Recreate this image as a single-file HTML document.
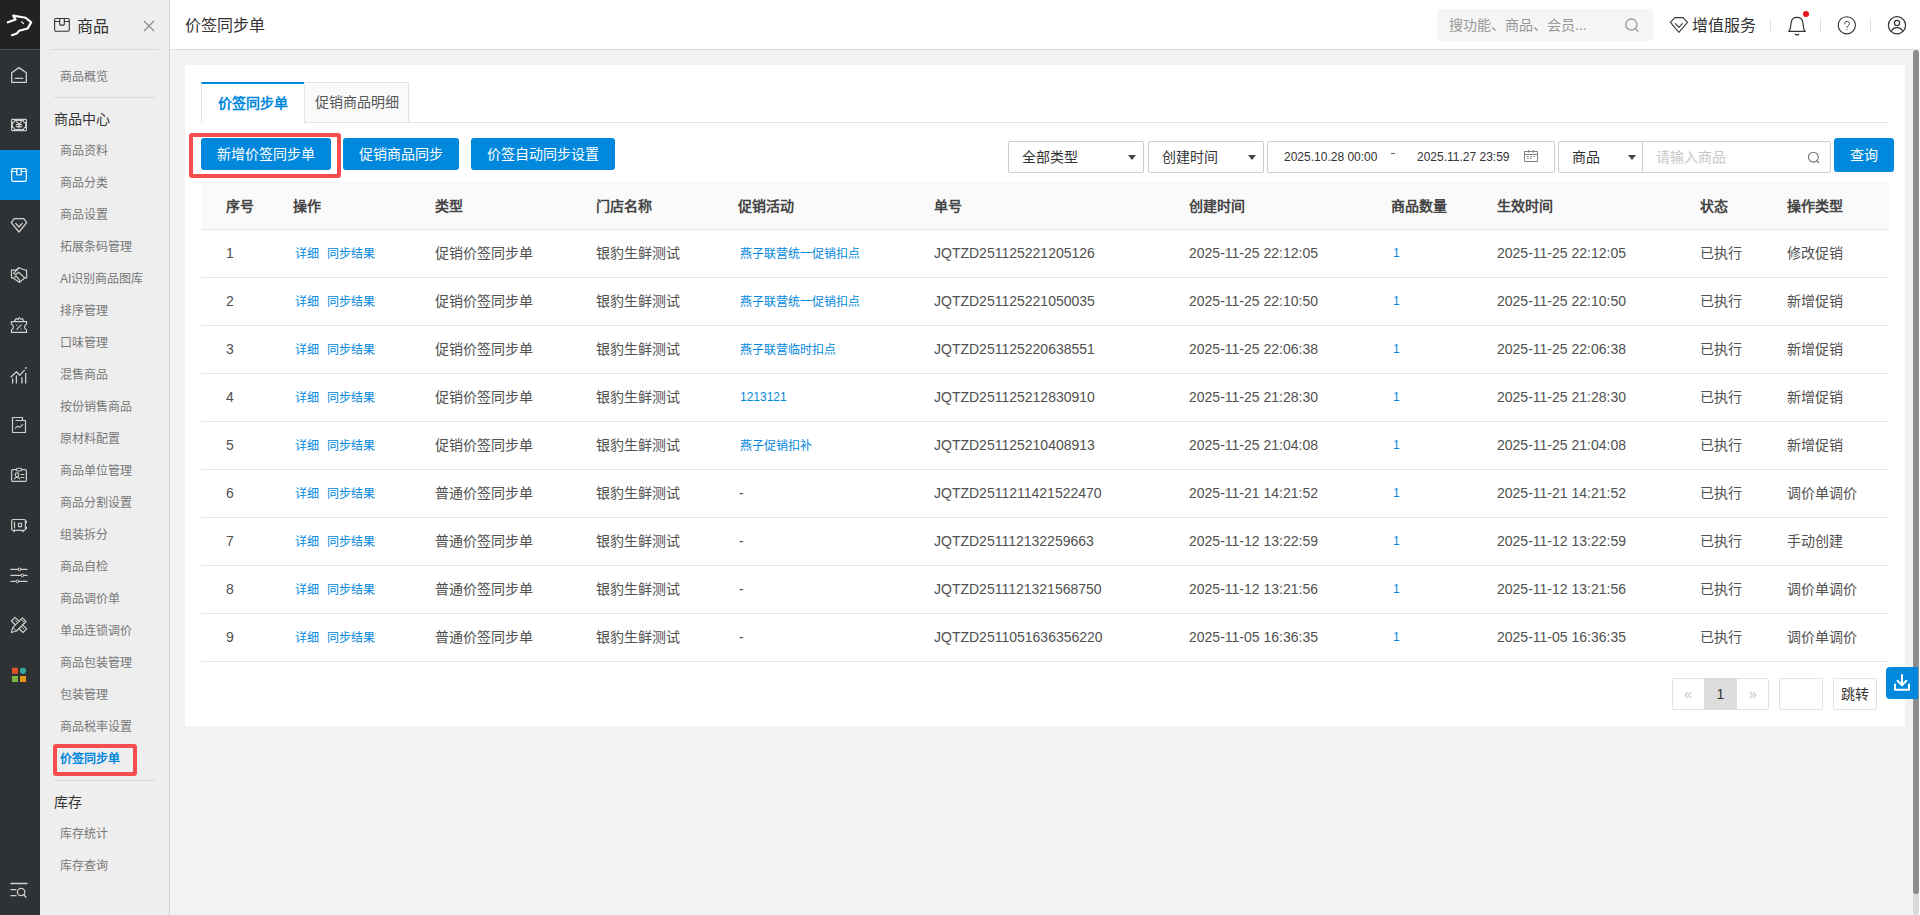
<!DOCTYPE html>
<html lang="zh-CN">
<head>
<meta charset="utf-8">
<style>
*{margin:0;padding:0;box-sizing:border-box}
html,body{width:1920px;height:915px;overflow:hidden;background:#f2f2f2;font-family:"Liberation Sans",sans-serif;color:#333}
.abs{position:absolute}
#nav{left:0;top:0;width:40px;height:915px;background:#2f3234}
#logo{left:0;top:0;width:40px;height:49px;background:#242220}
#logoline{left:0;top:49px;width:40px;height:1px;background:#4a4d50}
.navi{position:absolute;left:0;width:40px;height:50px}
.navi svg{position:absolute;left:0;top:0}
#side{left:40px;top:0;width:130px;height:915px;background:#eeeeee;border-right:1px solid #d2d2d2}
.si{position:absolute;left:20px;font-size:12px;color:#777;line-height:16px;white-space:nowrap}
.sh{position:absolute;left:14px;font-size:14px;color:#333;line-height:18px;white-space:nowrap}
.sdiv{position:absolute;height:1px;background:#d9d9d9}
#hdr{left:170px;top:0;width:1750px;height:50px;background:#fff;border-bottom:1px solid #dcdcdc}
#card{left:185px;top:65px;width:1720px;height:661px;background:#fff}
.btn{position:absolute;top:138px;height:32px;background:#0088dd;color:#fff;border-radius:3px;font-size:14px;line-height:32px;text-align:center;white-space:nowrap}
.sel{position:absolute;top:141px;height:32px;border:1px solid #cfcfcf;border-radius:2px;background:#fff;font-size:14px;line-height:30px;white-space:nowrap}
.tri{position:absolute;top:13px;width:0;height:0;border-left:4px solid transparent;border-right:4px solid transparent;border-top:5px solid #444}
table{position:absolute;left:201px;top:182px;width:1688px;border-collapse:collapse;table-layout:fixed}
th{height:48px;background:#fafafa;border-bottom:1px solid #e6e6e6;font-size:14px;font-weight:bold;text-align:left;padding:0;color:#333}
td{height:48px;border-bottom:1px solid #e6e6e6;font-size:14px;text-align:left;padding:0;color:#333;white-space:nowrap}
.th{font-size:14px;font-weight:bold;line-height:20px;color:#444;white-space:nowrap}
.td{font-size:14px;line-height:20px;color:#505050;white-space:nowrap}
.td.lk,.lk{color:#0088dd;font-size:12px}
</style>
</head>
<body>
<!-- left dark nav -->
<div id="nav" class="abs"></div>
<div id="logo" class="abs"></div>
<div id="logoline" class="abs"></div>
<svg class="abs" style="left:0;top:0" width="40" height="915" viewBox="0 0 40 915" fill="none" stroke="#cfcfcf" stroke-width="1.3" stroke-linejoin="round" stroke-linecap="round">
<rect x="0" y="150" width="40" height="50" fill="#0088dd" stroke="none"/>
<!-- logo -->
<path d="M7.8 22.3 L15.6 19.6 L13.2 15.6 L25.6 17.8 L31.2 22.4 L27.6 28.6 L19.2 30.8 L16.8 33.6 L12 35.2" stroke="#fff" stroke-width="2.1"/>
<path d="M21.6 21.8 L23.6 23.6" stroke="#fff" stroke-width="1.2"/>
<!-- home -->
<path d="M11.7 72.8 L19 67.6 L26.3 72.8 L26.3 82.3 L11.7 82.3 Z"/>
<path d="M15.2 78.4 L22.8 78.4"/>
<!-- money -->
<rect x="11.6" y="119.4" width="14.8" height="11.2" rx="0.8" stroke-width="1.2"/>
<path d="M14.6 120.4 H23.4 A2.2 2.2 0 0 0 25.6 122.6 V127.4 A2.2 2.2 0 0 0 23.4 129.6 H14.6 A2.2 2.2 0 0 0 12.4 127.4 V122.6 A2.2 2.2 0 0 0 14.6 120.4 Z" stroke-width="1.1"/>
<path d="M16.4 121.6 L19 124.2 L21.6 121.6 M16.2 124.6 H21.8 M16.2 126.6 H21.8 M19 124.2 V128" stroke-width="1.2"/>
<!-- box active -->
<rect x="11.7" y="168.6" width="14.6" height="12.8" rx="1.6" stroke="#fff" stroke-width="1.2"/><path d="M11.7 171.5 H16.8 M21.2 171.5 H26.3 M16.8 168.6 V174.4 Q16.8 175 17.4 175 H20.6 Q21.2 175 21.2 174.4 V168.6" stroke="#fff" stroke-width="1.2"/>
<!-- diamond -->
<path d="M14.2 218.6 H23.8 L26.7 222.6 L19 232 L11.3 222.6 Z"/>
<path d="M15.8 223.4 L19 227 L22.2 223.4"/>
<!-- handshake -->
<path d="M11.5 270.2 H15.6 L19 267.8 L25.2 270.2 H26.6 V277.8 H24.8 L19.6 282.4 L12.8 277.8 H11.5 Z" stroke-width="1.2"/>
<path d="M18.8 268 L13.6 273.4 L15.4 274.8 L18.6 272.2 L24.8 277.9" stroke-width="1.2"/>
<path d="M14.4 277.2 L16.4 276.2 L19.6 280.2 L19.6 282.2" stroke-width="1.2"/>
<!-- ticket -->
<path d="M11.4 321.6 H26.6 V324 Q24.6 325 24.6 327 Q24.6 329 26.6 330 V332.4 H11.4 V330 Q13.4 329 13.4 327 Q13.4 325 11.4 324 Z" stroke-width="1.2"/>
<path d="M14 321.6 L16.4 318.4 L18 319.6 L19.2 317.6 L21 319.4 L22.4 318.6 L24 321.6" stroke-width="1.1"/>
<path d="M21.2 324.8 L16.8 329.4" stroke-width="1.1"/>
<circle cx="16.8" cy="325.2" r="0.6" fill="#cfcfcf" stroke="none"/><circle cx="21.2" cy="329" r="0.6" fill="#cfcfcf" stroke="none"/>
<!-- chart -->
<path d="M11 377 L16.4 371.8 L19.7 375.2 L24.4 370.4"/>
<circle cx="25.8" cy="367.9" r="0.9" fill="#cfcfcf" stroke="none"/>
<path d="M12.6 379 V383 M16.4 375.8 V383 M21.9 377.6 V383 M25.7 373.4 V383"/>
<!-- doc -->
<path d="M12.5 417.5 H22.5 V420.5 H25.5 V432.5 H12.5 Z M16 420.5 H22.5" stroke-width="1.2"/>
<path d="M15.2 428.2 L17.6 426.2 L19.6 427.4 L22.8 424.6" stroke-width="1.1"/>
<!-- id card -->
<rect x="11.6" y="469.6" width="14.8" height="11.8" rx="1.2" stroke-width="1.2"/>
<rect x="16.3" y="468.2" width="5.4" height="2.8" rx="1.4" fill="#2f3234" stroke-width="1.1"/>
<circle cx="17" cy="474.7" r="1.8" stroke-width="1.1"/>
<path d="M14.4 478.8 Q17 475.4 19.7 478.8" stroke-width="1.1"/>
<path d="M21 474.5 H24 M21 477.5 H24" stroke-width="1"/>
<!-- safe -->
<rect x="11.7" y="519.5" width="13.7" height="10.8" rx="1.2" stroke-width="1.2"/>
<path d="M14.5 522 V527.8" stroke-width="1.2"/>
<path d="M18.6 523.2 H21.6 V526.6 H18.6 Z" stroke-width="1.1"/>
<path d="M14.2 530.6 V531.6 M22.9 530.6 V531.6 M26.2 521.4 V522.6 M26.2 527.4 V528.6" stroke-width="1.6"/>
<!-- sliders -->
<path d="M11 569.4 H18 M21 569.4 H27 M11 575.4 H21 M24 575.4 H27 M11 581.4 H16 M19 581.4 H27"/>
<circle cx="19.5" cy="569.4" r="1.4" stroke-width="1"/><circle cx="22.4" cy="575.4" r="1.4" stroke-width="1"/><circle cx="17.5" cy="581.4" r="1.4" stroke-width="1"/>
<!-- pencil ruler -->
<path d="M15 617.4 L26.7 628.9 L23 632.5 L11.4 621 Z" stroke-width="1.2"/>
<path d="M15.4 620.6 L16.8 622 M22.2 627.4 L23.6 628.8" stroke-width="1"/>
<path d="M11.4 632.5 L12.9 627.4 L22.4 617.9 L26 621.5 L16.5 631 Z" fill="#2f3234" stroke-width="1.2"/>
<path d="M21 619.3 L24.6 622.9 M12.9 627.4 L16.5 631" stroke-width="1"/>
<!-- color grid -->
<rect x="12" y="667.8" width="6" height="6" fill="#e0522a" stroke="none"/>
<circle cx="23" cy="670.8" r="3.1" fill="#3aa99c" stroke="none"/>
<rect x="12" y="676" width="6" height="6" fill="#7db544" stroke="none"/>
<rect x="20" y="676" width="6" height="6" fill="#e89512" stroke="none"/>
<!-- bottom search -->
<path d="M11 883.5 H27 M11 889.6 H16 M11 895.6 H16"/>
<circle cx="21.1" cy="892" r="3.7"/>
<path d="M23.8 894.8 L26 897.2"/>
</svg>

<!-- secondary sidebar -->
<div id="side" class="abs"></div>

<svg class="abs" style="left:50px;top:14px" width="24" height="22" viewBox="0 0 24 22" fill="none" stroke="#333" stroke-width="1.1"><rect x="4.6" y="4.5" width="14.7" height="12.8" rx="1.5"/><path d="M4.6 7.5 H9.7 M14.3 7.5 H19.3 M9.7 4.5 V10.5 Q9.7 11.1 10.3 11.1 H13.7 Q14.3 11.1 14.3 10.5 V4.5"/></svg>
<div class="abs" style="left:77px;top:16px;font-size:16px;line-height:22px;color:#333">商品</div>
<svg class="abs" style="left:143px;top:20px" width="12" height="12" viewBox="0 0 12 12" stroke="#888" stroke-width="1.1"><path d="M1 1 L11 11 M11 1 L1 11"/></svg>
<div class="sdiv" style="left:50px;top:49px;width:109px"></div>
<div class="si" style="left:60px;top:69px">商品概览</div>
<div class="sdiv" style="left:54px;top:97px;width:101px"></div>
<div class="sh" style="left:54px;top:110px">商品中心</div>
<div class="si" style="left:60px;top:143px">商品资料</div>
<div class="si" style="left:60px;top:175px">商品分类</div>
<div class="si" style="left:60px;top:207px">商品设置</div>
<div class="si" style="left:60px;top:239px">拓展条码管理</div>
<div class="si" style="left:60px;top:271px">AI识别商品图库</div>
<div class="si" style="left:60px;top:303px">排序管理</div>
<div class="si" style="left:60px;top:335px">口味管理</div>
<div class="si" style="left:60px;top:367px">混售商品</div>
<div class="si" style="left:60px;top:399px">按份销售商品</div>
<div class="si" style="left:60px;top:431px">原材料配置</div>
<div class="si" style="left:60px;top:463px">商品单位管理</div>
<div class="si" style="left:60px;top:495px">商品分割设置</div>
<div class="si" style="left:60px;top:527px">组装拆分</div>
<div class="si" style="left:60px;top:559px">商品自检</div>
<div class="si" style="left:60px;top:591px">商品调价单</div>
<div class="si" style="left:60px;top:623px">单品连锁调价</div>
<div class="si" style="left:60px;top:655px">商品包装管理</div>
<div class="si" style="left:60px;top:687px">包装管理</div>
<div class="si" style="left:60px;top:719px">商品税率设置</div>
<div class="si" style="left:60px;top:751px;color:#0088dd;font-weight:bold">价签同步单</div>
<div class="abs" style="left:53px;top:744px;width:84px;height:32px;border:4px solid #f64e4e;border-radius:3px"></div>
<div class="sdiv" style="left:54px;top:780px;width:101px"></div>
<div class="sh" style="left:54px;top:793px">库存</div>
<div class="si" style="left:60px;top:826px">库存统计</div>
<div class="si" style="left:60px;top:858px">库存查询</div>


<!-- header -->
<div id="hdr" class="abs"></div>

<div class="abs" style="left:185px;top:14.5px;font-size:16px;line-height:22px;color:#333">价签同步单</div>
<div class="abs" style="left:1437px;top:9px;width:216px;height:32px;background:#f5f5f5;border-radius:3px"></div>
<div class="abs" style="left:1449px;top:15px;font-size:14px;line-height:20px;color:#999">搜功能、商品、会员...</div>
<svg class="abs" style="left:1622px;top:15px" width="20" height="20" viewBox="0 0 20 20" fill="none" stroke="#999" stroke-width="1.3"><circle cx="9.4" cy="9.6" r="5.6"/><path d="M13.4 13.6 L16 16.2" stroke-linecap="round"/></svg>
<svg class="abs" style="left:1668px;top:15px" width="22" height="20" viewBox="0 0 22 20" fill="none" stroke="#333" stroke-width="1.05" stroke-linejoin="round"><path d="M6.7 2.6 H15.1 L19.5 7.4 L10.9 17.3 L2.4 7.4 Z"/><path d="M7.2 8.3 L10.9 12.3 L14.5 8.3"/></svg>
<div class="abs" style="left:1692px;top:14.5px;font-size:16px;line-height:22px;color:#333">增值服务</div>
<div class="abs" style="left:1770px;top:19px;width:1px;height:12px;background:#ddd"></div>
<svg class="abs" style="left:1786px;top:14px" width="22" height="24" viewBox="0 0 22 24" fill="none" stroke="#333" stroke-width="1.2" stroke-linejoin="round"><path d="M2.8 17.4 H19.2 L17.8 15 L16.8 8.4 Q16.2 3.4 11 3.4 Q5.8 3.4 5.2 8.4 L4.2 15 Z"/><path d="M9.3 20.2 Q11 21.6 12.7 20.2" stroke-linecap="round"/></svg>
<div class="abs" style="left:1803px;top:11px;width:6px;height:6px;border-radius:50%;background:#e8141e"></div>
<div class="abs" style="left:1820px;top:19px;width:1px;height:12px;background:#ddd"></div>
<svg class="abs" style="left:1836px;top:15px" width="22" height="22" viewBox="0 0 22 22" fill="none" stroke="#333" stroke-width="1.1"><circle cx="10.8" cy="10.3" r="8.6"/><path d="M8.6 8.8 Q8.6 6.3 11 6.3 Q13.4 6.3 13.4 8.6 Q13.4 10.1 11.7 11 Q10.9 11.5 10.9 12.8" stroke-linecap="round" stroke="#555" stroke-width="1"/><circle cx="10.9" cy="14.6" r="0.6" fill="#555" stroke="none"/></svg>
<div class="abs" style="left:1870px;top:19px;width:1px;height:12px;background:#ddd"></div>
<svg class="abs" style="left:1886px;top:15px" width="22" height="22" viewBox="0 0 22 22" fill="none" stroke="#333" stroke-width="1.2"><circle cx="11" cy="10.3" r="8.6"/><circle cx="11" cy="8" r="2.6"/><path d="M5.4 16.6 Q6.6 12.6 11 12.6 Q15.4 12.6 16.6 16.6"/></svg>


<!-- card -->
<div id="card" class="abs"></div>

<!-- tabs -->
<div class="abs" style="left:201px;top:122px;width:1688px;height:1px;background:#e4e4e4"></div>
<div class="abs" style="left:304px;top:82px;width:105px;height:41px;background:#fafafa;border:1px solid #e4e4e4"></div>
<div class="abs" style="left:201px;top:82px;width:103px;height:41px;background:#fff;border-left:1px solid #e4e4e4;border-top:2px solid #0088dd"></div>
<div class="abs" style="left:218px;top:93px;font-size:14px;line-height:20px;color:#0088dd;font-weight:bold">价签同步单</div>
<div class="abs" style="left:315px;top:92px;font-size:14px;line-height:20px;color:#555">促销商品明细</div>
<!-- buttons -->
<div class="abs" style="left:189px;top:133px;width:152px;height:45px;border:4px solid #f64e4e;border-radius:3px"></div>
<div class="btn" style="left:201px;width:130px">新增价签同步单</div>
<div class="btn" style="left:343px;width:116px">促销商品同步</div>
<div class="btn" style="left:471px;width:144px">价签自动同步设置</div>
<!-- filters -->
<div class="sel" style="left:1008px;width:136px"><span style="position:absolute;left:13px">全部类型</span><i class="tri" style="left:119px"></i></div>
<div class="sel" style="left:1148px;width:116px"><span style="position:absolute;left:13px">创建时间</span><i class="tri" style="left:99px"></i></div>
<div class="sel" style="left:1267px;width:288px;font-size:12px">
 <span style="position:absolute;left:16px">2025.10.28 00:00</span>
 <span style="position:absolute;left:123px;top:11px;width:4px;height:1px;background:#666"></span>
 <span style="position:absolute;left:149px">2025.11.27 23:59</span>
 <svg style="position:absolute;left:250px;top:2px" width="26" height="24" viewBox="0 0 26 24" fill="none" stroke="#808080" stroke-width="1"><path d="M6.5 7.5 H19.5 V17.5 H6.5 Z M6.5 10.5 H19.5 M10.5 6 V8.5 M15.5 6 V8.5"/><path d="M9 12.5 H10.8 M12 12.5 H13.9 M15.2 12.5 H16.8 M9 14.4 H10.8 M12 14.4 H13.9" stroke-width="0.9"/></svg>
</div>
<div class="sel" style="left:1558px;width:85px;border-radius:2px 0 0 2px"><span style="position:absolute;left:13px">商品</span><i class="tri" style="left:69px"></i></div>
<div class="sel" style="left:1642px;width:189px;border-radius:0 2px 2px 0"><span style="position:absolute;left:13px;color:#c8c8c8">请输入商品</span>
 <svg style="position:absolute;left:157px;top:2px" width="26" height="26" viewBox="0 0 26 26" fill="none" stroke="#707070" stroke-width="1.1"><circle cx="13.35" cy="13.2" r="4.9"/><path d="M17 17 L18.6 18.6" stroke-linecap="round"/></svg></div>
<div class="btn" style="left:1834px;width:60px;height:34px;line-height:34px">查询</div>
<div class="abs" style="left:201px;top:182px;width:1688px;height:47px;background:#fafafa"></div>
<div class="abs" style="left:201px;top:229px;width:1688px;height:1px;background:#e6e6e6"></div>
<div class="abs" style="left:201px;top:277px;width:1688px;height:1px;background:#e6e6e6"></div>
<div class="abs" style="left:201px;top:325px;width:1688px;height:1px;background:#e6e6e6"></div>
<div class="abs" style="left:201px;top:373px;width:1688px;height:1px;background:#e6e6e6"></div>
<div class="abs" style="left:201px;top:421px;width:1688px;height:1px;background:#e6e6e6"></div>
<div class="abs" style="left:201px;top:469px;width:1688px;height:1px;background:#e6e6e6"></div>
<div class="abs" style="left:201px;top:517px;width:1688px;height:1px;background:#e6e6e6"></div>
<div class="abs" style="left:201px;top:565px;width:1688px;height:1px;background:#e6e6e6"></div>
<div class="abs" style="left:201px;top:613px;width:1688px;height:1px;background:#e6e6e6"></div>
<div class="abs" style="left:201px;top:661px;width:1688px;height:1px;background:#e6e6e6"></div>
<div class="abs th" style="left:226px;top:196px">序号</div>
<div class="abs th" style="left:293px;top:196px">操作</div>
<div class="abs th" style="left:435px;top:196px">类型</div>
<div class="abs th" style="left:596px;top:196px">门店名称</div>
<div class="abs th" style="left:738px;top:196px">促销活动</div>
<div class="abs th" style="left:934px;top:196px">单号</div>
<div class="abs th" style="left:1189px;top:196px">创建时间</div>
<div class="abs th" style="left:1391px;top:196px">商品数量</div>
<div class="abs th" style="left:1497px;top:196px">生效时间</div>
<div class="abs th" style="left:1700px;top:196px">状态</div>
<div class="abs th" style="left:1787px;top:196px">操作类型</div>
<div class="abs td" style="left:226px;top:243px">1</div><div class="abs td lk" style="left:295px;top:244px">详细</div><div class="abs td lk" style="left:327px;top:244px">同步结果</div><div class="abs td" style="left:435px;top:243px">促销价签同步单</div><div class="abs td" style="left:596px;top:243px">银豹生鲜测试</div><div class="abs td lk" style="left:740px;top:244px">燕子联营统一促销扣点</div><div class="abs td" style="left:934px;top:243px">JQTZD251125221205126</div><div class="abs td" style="left:1189px;top:243px">2025-11-25 22:12:05</div><div class="abs td lk" style="left:1393px;top:243px">1</div><div class="abs td" style="left:1497px;top:243px">2025-11-25 22:12:05</div><div class="abs td" style="left:1700px;top:243px">已执行</div><div class="abs td" style="left:1787px;top:243px">修改促销</div>
<div class="abs td" style="left:226px;top:291px">2</div><div class="abs td lk" style="left:295px;top:292px">详细</div><div class="abs td lk" style="left:327px;top:292px">同步结果</div><div class="abs td" style="left:435px;top:291px">促销价签同步单</div><div class="abs td" style="left:596px;top:291px">银豹生鲜测试</div><div class="abs td lk" style="left:740px;top:292px">燕子联营统一促销扣点</div><div class="abs td" style="left:934px;top:291px">JQTZD251125221050035</div><div class="abs td" style="left:1189px;top:291px">2025-11-25 22:10:50</div><div class="abs td lk" style="left:1393px;top:291px">1</div><div class="abs td" style="left:1497px;top:291px">2025-11-25 22:10:50</div><div class="abs td" style="left:1700px;top:291px">已执行</div><div class="abs td" style="left:1787px;top:291px">新增促销</div>
<div class="abs td" style="left:226px;top:339px">3</div><div class="abs td lk" style="left:295px;top:340px">详细</div><div class="abs td lk" style="left:327px;top:340px">同步结果</div><div class="abs td" style="left:435px;top:339px">促销价签同步单</div><div class="abs td" style="left:596px;top:339px">银豹生鲜测试</div><div class="abs td lk" style="left:740px;top:340px">燕子联营临时扣点</div><div class="abs td" style="left:934px;top:339px">JQTZD251125220638551</div><div class="abs td" style="left:1189px;top:339px">2025-11-25 22:06:38</div><div class="abs td lk" style="left:1393px;top:339px">1</div><div class="abs td" style="left:1497px;top:339px">2025-11-25 22:06:38</div><div class="abs td" style="left:1700px;top:339px">已执行</div><div class="abs td" style="left:1787px;top:339px">新增促销</div>
<div class="abs td" style="left:226px;top:387px">4</div><div class="abs td lk" style="left:295px;top:388px">详细</div><div class="abs td lk" style="left:327px;top:388px">同步结果</div><div class="abs td" style="left:435px;top:387px">促销价签同步单</div><div class="abs td" style="left:596px;top:387px">银豹生鲜测试</div><div class="abs td lk" style="left:740px;top:387px">1213121</div><div class="abs td" style="left:934px;top:387px">JQTZD251125212830910</div><div class="abs td" style="left:1189px;top:387px">2025-11-25 21:28:30</div><div class="abs td lk" style="left:1393px;top:387px">1</div><div class="abs td" style="left:1497px;top:387px">2025-11-25 21:28:30</div><div class="abs td" style="left:1700px;top:387px">已执行</div><div class="abs td" style="left:1787px;top:387px">新增促销</div>
<div class="abs td" style="left:226px;top:435px">5</div><div class="abs td lk" style="left:295px;top:436px">详细</div><div class="abs td lk" style="left:327px;top:436px">同步结果</div><div class="abs td" style="left:435px;top:435px">促销价签同步单</div><div class="abs td" style="left:596px;top:435px">银豹生鲜测试</div><div class="abs td lk" style="left:740px;top:436px">燕子促销扣补</div><div class="abs td" style="left:934px;top:435px">JQTZD251125210408913</div><div class="abs td" style="left:1189px;top:435px">2025-11-25 21:04:08</div><div class="abs td lk" style="left:1393px;top:435px">1</div><div class="abs td" style="left:1497px;top:435px">2025-11-25 21:04:08</div><div class="abs td" style="left:1700px;top:435px">已执行</div><div class="abs td" style="left:1787px;top:435px">新增促销</div>
<div class="abs td" style="left:226px;top:483px">6</div><div class="abs td lk" style="left:295px;top:484px">详细</div><div class="abs td lk" style="left:327px;top:484px">同步结果</div><div class="abs td" style="left:435px;top:483px">普通价签同步单</div><div class="abs td" style="left:596px;top:483px">银豹生鲜测试</div><div class="abs td" style="left:739px;top:483px">-</div><div class="abs td" style="left:934px;top:483px">JQTZD2511211421522470</div><div class="abs td" style="left:1189px;top:483px">2025-11-21 14:21:52</div><div class="abs td lk" style="left:1393px;top:483px">1</div><div class="abs td" style="left:1497px;top:483px">2025-11-21 14:21:52</div><div class="abs td" style="left:1700px;top:483px">已执行</div><div class="abs td" style="left:1787px;top:483px">调价单调价</div>
<div class="abs td" style="left:226px;top:531px">7</div><div class="abs td lk" style="left:295px;top:532px">详细</div><div class="abs td lk" style="left:327px;top:532px">同步结果</div><div class="abs td" style="left:435px;top:531px">普通价签同步单</div><div class="abs td" style="left:596px;top:531px">银豹生鲜测试</div><div class="abs td" style="left:739px;top:531px">-</div><div class="abs td" style="left:934px;top:531px">JQTZD251112132259663</div><div class="abs td" style="left:1189px;top:531px">2025-11-12 13:22:59</div><div class="abs td lk" style="left:1393px;top:531px">1</div><div class="abs td" style="left:1497px;top:531px">2025-11-12 13:22:59</div><div class="abs td" style="left:1700px;top:531px">已执行</div><div class="abs td" style="left:1787px;top:531px">手动创建</div>
<div class="abs td" style="left:226px;top:579px">8</div><div class="abs td lk" style="left:295px;top:580px">详细</div><div class="abs td lk" style="left:327px;top:580px">同步结果</div><div class="abs td" style="left:435px;top:579px">普通价签同步单</div><div class="abs td" style="left:596px;top:579px">银豹生鲜测试</div><div class="abs td" style="left:739px;top:579px">-</div><div class="abs td" style="left:934px;top:579px">JQTZD2511121321568750</div><div class="abs td" style="left:1189px;top:579px">2025-11-12 13:21:56</div><div class="abs td lk" style="left:1393px;top:579px">1</div><div class="abs td" style="left:1497px;top:579px">2025-11-12 13:21:56</div><div class="abs td" style="left:1700px;top:579px">已执行</div><div class="abs td" style="left:1787px;top:579px">调价单调价</div>
<div class="abs td" style="left:226px;top:627px">9</div><div class="abs td lk" style="left:295px;top:628px">详细</div><div class="abs td lk" style="left:327px;top:628px">同步结果</div><div class="abs td" style="left:435px;top:627px">普通价签同步单</div><div class="abs td" style="left:596px;top:627px">银豹生鲜测试</div><div class="abs td" style="left:739px;top:627px">-</div><div class="abs td" style="left:934px;top:627px">JQTZD2511051636356220</div><div class="abs td" style="left:1189px;top:627px">2025-11-05 16:36:35</div><div class="abs td lk" style="left:1393px;top:627px">1</div><div class="abs td" style="left:1497px;top:627px">2025-11-05 16:36:35</div><div class="abs td" style="left:1700px;top:627px">已执行</div><div class="abs td" style="left:1787px;top:627px">调价单调价</div>

<div class="abs" style="left:1672px;top:678px;width:97px;height:32px;border:1px solid #e2e2e2;border-radius:2px;background:#fff"></div>
<div class="abs" style="left:1704px;top:678px;width:33px;height:32px;background:#dddddd"></div>
<div class="abs" style="left:1672px;width:32px;top:679px;line-height:30px;text-align:center;font-size:14px;color:#c4c4c4">«</div>
<div class="abs" style="left:1704px;width:33px;top:679px;line-height:30px;text-align:center;font-size:14px;color:#333">1</div>
<div class="abs" style="left:1737px;width:32px;top:679px;line-height:30px;text-align:center;font-size:14px;color:#c4c4c4">»</div>
<div class="abs" style="left:1779px;top:678px;width:44px;height:32px;border:1px solid #e2e2e2;border-radius:2px;background:#fff"></div>
<div class="abs" style="left:1833px;top:678px;width:44px;height:32px;border:1px solid #e2e2e2;border-radius:2px;background:#fff;font-size:14px;line-height:30px;text-align:center;color:#333">跳转</div>

<div class="abs" style="left:1913px;top:50px;width:6px;height:865px;background:#d9d9d9;border-radius:3px"></div>
<div class="abs" style="left:1913px;top:50px;width:6px;height:844px;background:#8c8c8c;border-radius:3px"></div>
<div class="abs" style="left:1919px;top:50px;width:1px;height:865px;background:#fff"></div>
<div class="abs" style="left:1886px;top:667px;width:32px;height:32px;background:#0088dd;border-radius:4px 0 0 4px"></div>
<svg class="abs" style="left:1890px;top:671px" width="24" height="24" viewBox="0 0 24 24" fill="none" stroke="#fff" stroke-width="2" stroke-linecap="round" stroke-linejoin="round"><path d="M12 4 V14 M7.6 9.8 L12 14.2 L16.4 9.8 M5 13.6 V18.8 H19 V13.6"/></svg>


</body>
</html>
